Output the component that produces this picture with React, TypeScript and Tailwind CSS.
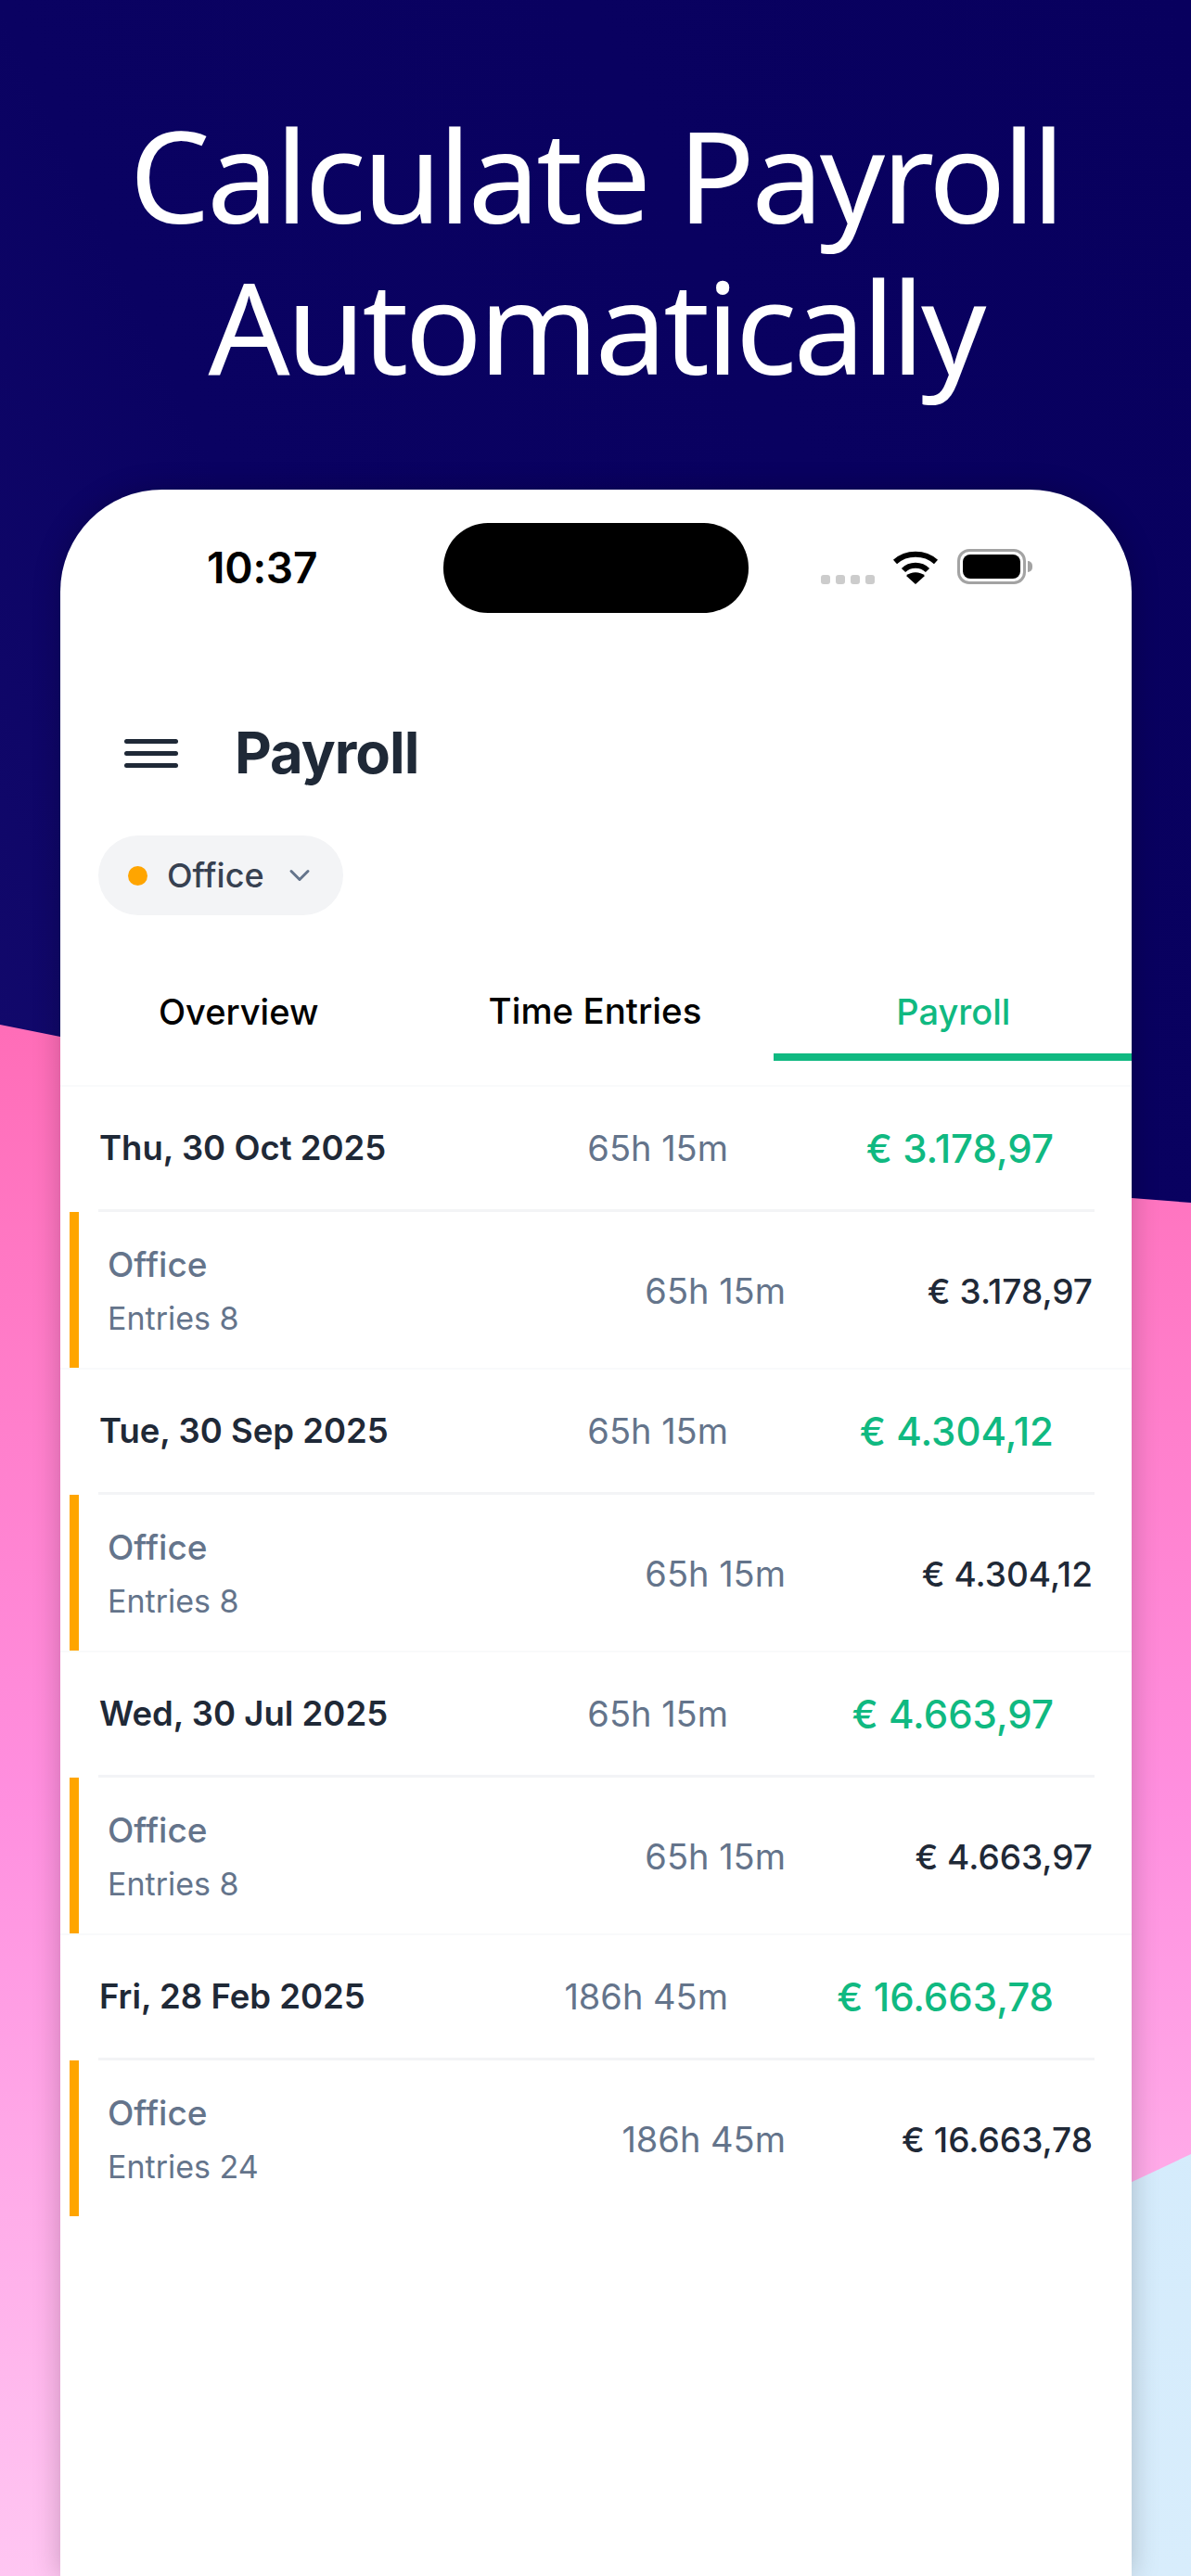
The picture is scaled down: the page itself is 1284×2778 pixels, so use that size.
import { ChevronDown } from "lucide-react";

const periods = [
  { date: "Thu, 30 Oct 2025", hours: "65h 15m", amount: "€ 3.178,97", entries: "Entries 8" },
  { date: "Tue, 30 Sep 2025", hours: "65h 15m", amount: "€ 4.304,12", entries: "Entries 8" },
  { date: "Wed, 30 Jul 2025", hours: "65h 15m", amount: "€ 4.663,97", entries: "Entries 8" },
  { date: "Fri, 28 Feb 2025", hours: "186h 45m", amount: "€ 16.663,78", entries: "Entries 24" },
];

function StatusBar() {
  return (
    <div className="flex h-[97px] items-center pl-[158px]">
      <span className="w-[255px] text-[46px] font-semibold tracking-[-0.2px] text-black">10:37</span>
      <div className="h-[97px] w-[329px] rounded-[48px] bg-black" />
      <div className="ml-[78px] flex items-center">
        <div className="mt-[24px] flex gap-[6px]">
          <span className="size-[10px] rounded-[3px] bg-[#cccccc]" />
          <span className="size-[10px] rounded-[3px] bg-[#cccccc]" />
          <span className="size-[10px] rounded-[3px] bg-[#cccccc]" />
          <span className="size-[10px] rounded-[3px] bg-[#cccccc]" />
        </div>
        <svg className="ml-[19px] mt-[-3px]" width="50" height="37" viewBox="0 0 50 37" fill="none">
          <path d="M3 13 C15 2 35 2 47 13" stroke="#000" strokeWidth="6" />
          <path d="M12 22 C19 15 31 15 38 22" stroke="#000" strokeWidth="6" />
          <path d="M25 37 L15 28 C20 23 30 23 35 28 Z" fill="#000" />
        </svg>
        <div className="ml-[20px] mt-[-3px] flex items-center">
          <div className="flex h-[38px] w-[74px] rounded-[13px] border-[3px] border-[#a3a3a3] p-[3px]">
            <div className="flex-1 rounded-[8px] bg-black" />
          </div>
          <div className="ml-[2px] h-[12px] w-[5px] rounded-r-full bg-[#a3a3a3]" />
        </div>
      </div>
    </div>
  );
}

function Tabs() {
  return (
    <div className="mt-[53px] flex border-b-2 border-[#f9fafb] pb-[26px] text-[38px] font-[450]">
      <div className="flex h-[104px] flex-1 items-center justify-center pb-[2px] text-black">Overview</div>
      <div className="flex h-[104px] flex-1 items-center justify-center pb-[2px] text-[38.5px] text-black">Time Entries</div>
      <div className="flex h-[104px] flex-1 items-center justify-center border-b-[8px] border-[#10b981] pl-[2px] pt-[6px] text-[#10b981]">
        Payroll
      </div>
    </div>
  );
}

function PeriodGroup({ date, hours, amount, entries }: (typeof periods)[number]) {
  return (
    <div className="group">
      <div className="flex h-[132px] items-center pl-[42px] pr-[84px]">
        <span className="flex-1 text-[36.5px] font-semibold text-[#1f2937]">{date}</span>
        <span className="text-[38px] text-[#64748b]">{hours}</span>
        <span className="w-[351px] text-right text-[42px] font-medium text-[#10b981]">{amount}</span>
      </div>
      <div className="ml-[41px] mr-[40px] h-[3px] bg-[#f3f4f6]" />
      <div className="ml-[10px] flex h-[168px] items-center border-l-[10px] border-[#ffa500] pl-[31px] pr-[42px]">
        <div className="flex flex-1 flex-col gap-[18px] pt-[3px]">
          <span className="text-[37px] font-medium leading-[40px] text-[#64748b]">Office</span>
          <span className="text-[34px] leading-[40px] text-[#64748b]">{entries}</span>
        </div>
        <span className="pt-[2px] text-[38px] text-[#64748b]">{hours}</span>
        <span className="w-[331px] pt-[3px] text-right text-[37px] font-medium text-[#1f2937]">{amount}</span>
      </div>
      <div className="h-[2px] bg-[#f9fafb] group-last:hidden" />
    </div>
  );
}

export default function App() {
  return (
    <div className="relative flex h-[2778px] w-[1284px] flex-col overflow-hidden bg-gradient-to-tr from-[#1d1379] via-[#0a0262] to-[#08005e] font-['Inter',sans-serif]">
      <div className="absolute inset-0 bg-gradient-to-b from-[#ff6db8] from-40% via-[#ff8fdf] via-70% to-[#ffc6f2] [clip-path:polygon(0_1105px,65px_1118px,1220px_1292px,1284px_1297px,1284px_2778px,0_2778px)]" />
      <div className="absolute inset-0 bg-gradient-to-b from-[#c4e4fb] to-[#d8edfc] [clip-path:polygon(1284px_2323px,1284px_2778px,316px_2778px)]" />

      <h1 className="relative h-[528px] pt-[106px] text-center font-['Noto_Sans',sans-serif] text-[138px] font-normal leading-[163px] tracking-[-3.75px] text-white">
        Calculate Payroll
        <br />
        Automatically
      </h1>

      <div className="relative ml-[65px] mr-[64px] flex flex-1 flex-col rounded-t-[110px] bg-white pt-[36px] shadow-[0_0_30px_rgba(0,0,0,0.22)]">
        <StatusBar />

        <div className="ml-[69px] mt-[121px] flex h-[60px] items-center gap-[61px]">
          <div className="flex w-[58px] flex-col gap-[8px]">
            <span className="h-[5px] rounded-full bg-[#1f2937]" />
            <span className="h-[5px] rounded-full bg-[#1f2937]" />
            <span className="h-[5px] rounded-full bg-[#1f2937]" />
          </div>
          <span className="text-[61.5px] font-bold tracking-[-1px] text-[#1f2937]">Payroll</span>
        </div>

        <div className="ml-[41px] mt-[59px] flex h-[86px] w-[264px] items-center rounded-full bg-[#f3f4f6] pl-[32px]">
          <span className="size-[21px] rounded-full bg-[#ffa500]" />
          <span className="ml-[21px] text-[36px] font-medium text-[#374151]">Office</span>
          <ChevronDown className="ml-[20px] text-[#64748b]" size={36} strokeWidth={2} />
        </div>

        <Tabs />

        {periods.map((p) => (
          <PeriodGroup key={p.date} {...p} />
        ))}
      </div>
    </div>
  );
}
